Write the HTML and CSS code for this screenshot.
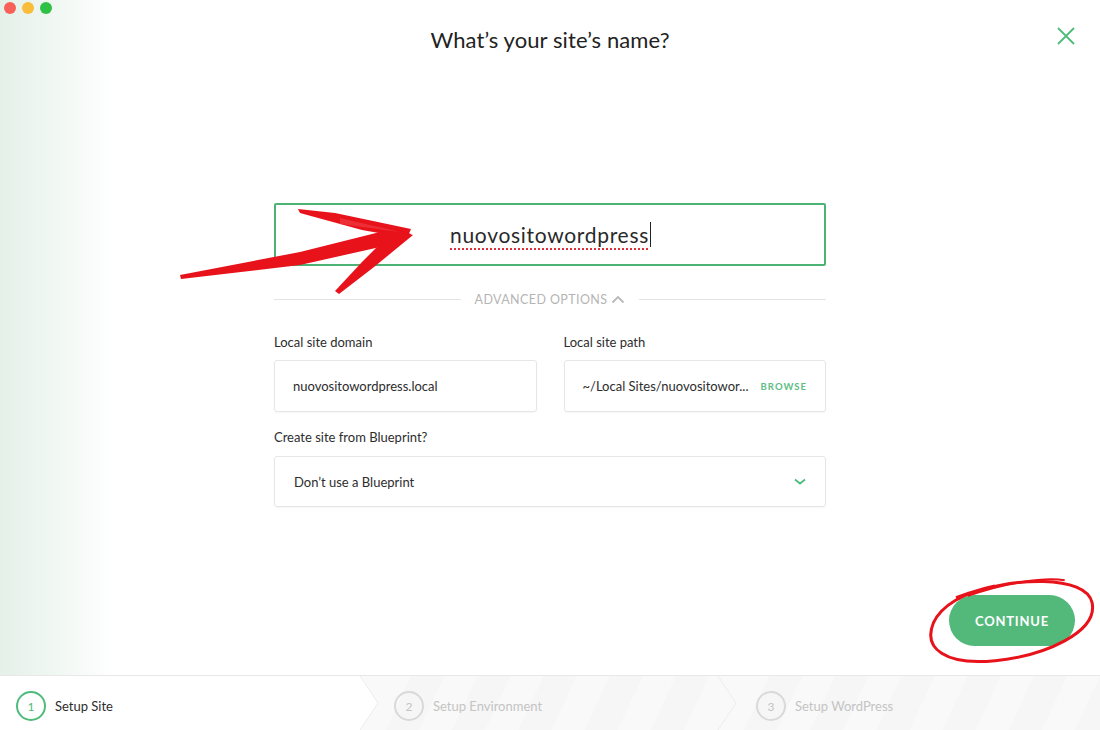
FILE: index.html
```html
<!DOCTYPE html>
<html lang="en">
<head>
  <meta charset="UTF-8" />
  <title>Local - New Site</title>
  <link rel="stylesheet" href="styles.css">
</head>
<body>

<div class="app">

  <div class="main">

    <div class="topbar">
      <div class="traffic">
        <span class="dot red"></span>
        <span class="dot yellow"></span>
        <span class="dot green"></span>
      </div>
      <h1>What’s your site’s name?</h1>
      <div class="close">
        <svg width="18" height="18" viewBox="0 0 18 18">
          <path d="M1 1 L17 17 M17 1 L1 17" stroke="#4fbb7b" stroke-width="1.8" fill="none" />
        </svg>
      </div>
    </div>

    <div class="form">
      <div class="site-name">
        <span class="typed">nuovositowordpress</span><span class="caret"></span>
      </div>

      <div class="advanced">
        <span class="rule"></span>
        <span class="advanced-label">ADVANCED OPTIONS
          <svg width="14" height="9" viewBox="0 0 14 9">
            <path d="M1.5 7.5 L7 2 L12.5 7.5" stroke="#b9b9b9" stroke-width="1.8" fill="none" />
          </svg>
        </span>
        <span class="rule"></span>
      </div>

      <div class="two-col">
        <div class="field">
          <label>Local site domain</label>
          <div class="box">nuovositowordpress.local</div>
        </div>
        <div class="field">
          <label>Local site path</label>
          <div class="box path">
            <span>~/Local Sites/nuovositowor...</span>
            <span class="browse">BROWSE</span>
          </div>
        </div>
      </div>

      <div class="field blueprint">
        <label>Create site from Blueprint?</label>
        <div class="box select">
          <span>Don’t use a Blueprint</span>
          <svg width="14" height="9" viewBox="0 0 14 9">
            <path d="M2 2.5 L7 6.5 L12 2.5" stroke="#4fbb7b" stroke-width="1.8" fill="none" />
          </svg>
        </div>
      </div>
    </div>

    <div class="actions">
      <button class="continue">CONTINUE</button>
    </div>

    <!-- hand drawn annotations on top of the screenshot -->
    <svg class="marks" width="1100" height="676" viewBox="0 0 1100 676">
      <path fill="#e8121b" d="M180 275 L300 252 L396 228 L411 234 L398 243 L300 265 L181 279 Z" />
      <path fill="#e8121b" d="M298 209 L335 213 L411 229 L407 238 L362 230 L300 213 Z" />
      <path fill="#e8121b" d="M397 230 L413 235 L374 267 L339 294 L335 291 L362 262 L386 238 Z" />
      <path fill="#ee3a40" opacity="0.7" d="M340 218 L400 232 L340 224 Z" />
      <g transform="rotate(-8 1012 622)" fill="none" stroke="#e8121b" stroke-width="3">
        <path d="M960 590 C 1020 576, 1092 586, 1094 614 C 1096 644, 1040 660, 990 658 C 940 656, 920 636, 934 612 C 944 596, 968 586, 1000 584" />
        <path d="M972 590 C 1010 582, 1050 582, 1070 588" stroke-width="2" />
      </g>
    </svg>
  </div>

  <div class="steps">
    <div class="step active">
      <span class="num">1</span>
      <span class="step-name">Setup Site</span>
    </div>
    <svg class="chevron" width="18" height="54" viewBox="0 0 18 54">
      <rect width="18" height="54" fill="#f9f9f9" />
      <path d="M0 0 L18 27 L0 54 Z" fill="#fff" />
      <path d="M0 0 L18 27 L0 54" stroke="#ececec" fill="none" />
    </svg>
    <div class="step">
      <span class="num">2</span>
      <span class="step-name">Setup Environment</span>
    </div>
    <svg class="chevron" width="18" height="54" viewBox="0 0 18 54">
      <rect width="18" height="54" fill="#f9f9f9" />
      <path d="M0 0 L18 27 L0 54" stroke="#ececec" fill="none" />
    </svg>
    <div class="step last">
      <span class="num">3</span>
      <span class="step-name">Setup WordPress</span>
    </div>
  </div>

</div>

</body>
</html>
```

FILE: styles.css
```css
body {
  margin: 0;
  font-family: Lato, "Open Sans", Arial, sans-serif;
  background: #fff;
  color: #333;
}

.app {
  width: 1100px;
  height: 730px;
  display: flex;
  flex-direction: column;
}

.main {
  flex: 1;
  position: relative;
  display: flex;
  flex-direction: column;
  background: linear-gradient(to right, #e5f0e9 0, #ecf5ef 35px, #f4f9f6 70px, #fff 115px);
}

/* Top bar: window buttons, title, close */
.topbar {
  display: grid;
  grid-template-columns: 1fr auto 1fr;
  height: 80px;
}

.traffic {
  display: flex;
  gap: 6px;
  padding: 2px 0 0 4px;
  align-self: start;
}

.dot {
  width: 12px;
  height: 12px;
  border-radius: 50%;
}

.dot.red { background: #f7615a; }
.dot.yellow { background: #f8bd3b; }
.dot.green { background: #2fc145; }

h1 {
  margin: 0;
  align-self: center;
  font-size: 22px;
  font-weight: 400;
  color: #222;
  letter-spacing: 0.1px;
  padding-bottom: 1px;
}

.close {
  justify-self: end;
  align-self: center;
  padding: 0 25px 8px 0;
  display: flex;
}

/* Form */
.form {
  width: 552px;
  margin: 123px auto 0;
}

.site-name {
  height: 59px;
  border: 2px solid #4db374;
  border-radius: 2px;
  display: flex;
  align-items: center;
  justify-content: center;
  padding-left: 1px;
}

.typed {
  font-size: 21px;
  letter-spacing: 0.7px;
  color: #2a2a2a;
  text-decoration: underline dotted #e0313a;
  text-decoration-thickness: 2px;
  text-underline-offset: 5px;
}

.caret {
  width: 1px;
  height: 25px;
  background: #222;
  margin-left: 1px;
}

.advanced {
  display: flex;
  align-items: center;
  gap: 14px;
  margin-top: 25px;
  height: 16px;
}

.rule {
  flex: 1;
  height: 1px;
  background: #e4e4e4;
}

.advanced-label {
  font-size: 12.5px;
  color: #b5b5b5;
  letter-spacing: 0.4px;
  display: flex;
  align-items: center;
  gap: 4px;
}

.two-col {
  display: flex;
  gap: 27px;
  margin-top: 27px;
}

.two-col .field {
  flex: 1;
}

.field label {
  display: block;
  font-size: 13px;
  line-height: 16px;
  color: #2d2d2d;
  margin-bottom: 10px;
}

.field.blueprint {
  margin-top: 17px;
}

.field.blueprint label {
  margin-bottom: 11px;
}

.box {
  height: 50px;
  border: 1px solid #e6e6e6;
  border-radius: 3px;
  box-shadow: 0 1px 2px rgba(0, 0, 0, 0.04);
  display: flex;
  align-items: center;
  padding: 0 18px;
  font-size: 13px;
  color: #2d2d2d;
}

.box.path {
  justify-content: space-between;
  padding: 0 18px 0 18px;
}

.browse {
  font-size: 9.5px;
  font-weight: 700;
  color: #5dbd84;
  letter-spacing: 1px;
}

.box.select {
  justify-content: space-between;
  padding: 0 18px 0 19px;
  height: 49px;
}

.actions {
  margin-top: auto;
  display: flex;
  justify-content: flex-end;
  padding: 0 25px 29px 0;
}

button.continue {
  width: 126px;
  height: 51px;
  border: none;
  border-radius: 26px;
  background: #52b97b;
  color: #fff;
  font-family: inherit;
  font-size: 13px;
  font-weight: 700;
  letter-spacing: 0.8px;
}

.marks {
  position: absolute;
  left: 0;
  top: 0;
  pointer-events: none;
}

/* Bottom steps bar */
.steps {
  height: 54px;
  border-top: 1px solid #e8e8e8;
  display: flex;
}

.step {
  display: flex;
  align-items: center;
  gap: 9px;
  padding: 6px 0 0 16px;
  background: repeating-linear-gradient(115deg, #f9f9f9 0, #f9f9f9 30px, #f6f6f6 30px, #f6f6f6 60px);
  font-size: 13px;
  color: #c4c4c4;
  width: 324px;
}

.step.active {
  background: #fff;
  width: 344px;
  color: #2d2d2d;
}

.step.last {
  flex: 1;
  padding-left: 20px;
}

.num {
  width: 26px;
  height: 26px;
  border: 2px solid #d9d9d9;
  border-radius: 50%;
  display: flex;
  align-items: center;
  justify-content: center;
  font-size: 12px;
  color: #c4c4c4;
}

.step.active .num {
  border-color: #4fbb7b;
  color: #4fbb7b;
}
```
